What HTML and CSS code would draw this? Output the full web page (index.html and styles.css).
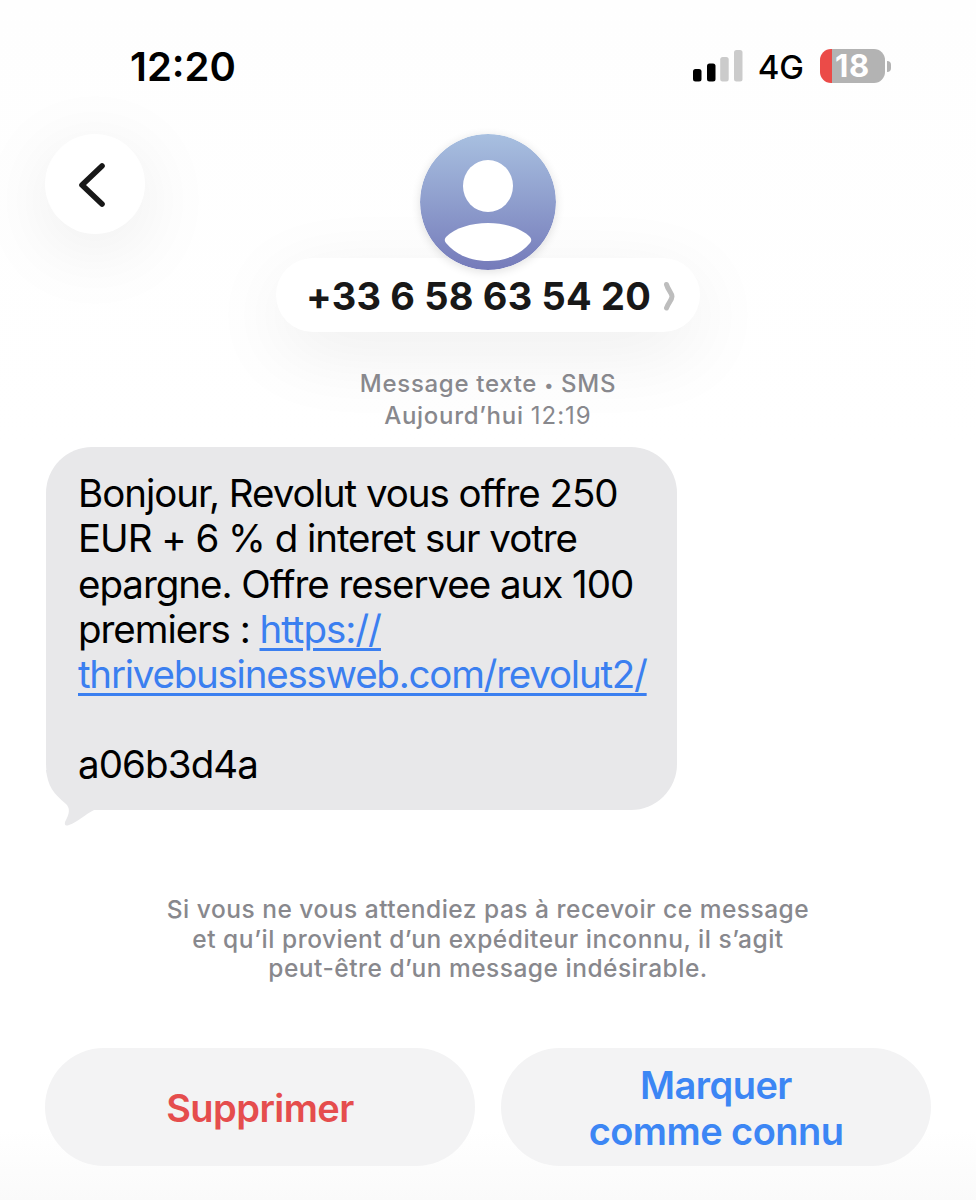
FILE: index.html
```html
<!DOCTYPE html>
<html lang="fr">

<head>
    <meta charset="UTF-8">
    <meta name="viewport" content="width=device-width, initial-scale=1.0">
    <title>Messages</title>
    <link rel="stylesheet" href="styles.css">
</head>
<body>
    <div class="status-bar">
        <span class="time">12:20</span>
        <div class="indicators">
            <svg class="signal" width="50" height="32" viewBox="0 0 50 32">
                <rect x="0" y="19" width="8.5" height="12.5" rx="2.5" fill="#000"/>
                <rect x="14" y="13.5" width="8.5" height="18" rx="2.5" fill="#000"/>
                <rect x="27.2" y="7" width="8.5" height="24.5" rx="2.5" fill="#cbcbcb"/>
                <rect x="41" y="0" width="8.5" height="31.5" rx="2.5" fill="#cbcbcb"/>
            </svg>
            <span class="network">4G</span>
            <div class="battery">
                <span class="battery-body">18</span>
                <span class="battery-tip"></span>
            </div>
        </div>
    </div>

    <header class="header">
        <button class="back" aria-label="Retour">
            <svg width="30" height="46" viewBox="0 0 30 46">
                <path d="M26 4 L6 23 L26 42" fill="none" stroke="#181818" stroke-width="5.6" stroke-linecap="round" stroke-linejoin="round"/>
            </svg>
        </button>
        <div class="contact">
            <svg class="avatar" width="136" height="136" viewBox="0 0 136 136">
                <defs>
                    <linearGradient id="avatarFill" x1="0" y1="0" x2="0" y2="1">
                        <stop offset="0" stop-color="#a8c0e0"/>
                        <stop offset="1" stop-color="#757bba"/>
                    </linearGradient>
                </defs>
                <circle cx="68" cy="68" r="68" fill="url(#avatarFill)"/>
                <ellipse cx="68" cy="52" rx="25" ry="26" fill="#fff"/>
                <path d="M26 103 C35 94 51 89 68 89 C85 89 101 94 110 103 Q112.500 106 110 109 C100 121 85 127 68 127 C51 127 36 121 26 109 Q23.500 106 26 103 Z" fill="#fff"/>
            </svg>
            <div class="contact-name">
                <span class="number">+33 6 58 63 54 20</span>
                <svg width="14" height="30" viewBox="0 0 14 30">
                    <path d="M3.500 3.500 C5 9 9 12 9 15.500 C9 19 5 22 3.500 27" fill="none" stroke="#bdbdbd" stroke-width="5" stroke-linecap="round"/>
                </svg>
            </div>
        </div>
    </header>

    <div class="meta">
        <div class="meta-type">Message texte <span class="dot">•</span> SMS</div>
        <div class="meta-date">Aujourd’hui <span class="hour">12:19</span></div>
    </div>

    <div class="bubble">
        <p>
            <span class="line">Bonjour, Revolut vous offre 250</span>
            <span class="line">EUR + 6 % d interet sur votre</span>
            <span class="line">epargne. Offre reservee aux 100</span>
            <span class="line">premiers : <a href="#">https://</a></span>
            <span class="line link-line"><a href="#">thrivebusinessweb.com/revolut2/</a></span>
        </p>
        <p class="code">a06b3d4a</p>
        <svg class="tail" width="60" height="60" viewBox="0 0 60 60">
            <path d="M0 0 C2 16 7 23 20 34 C24 38 24 43 19 52 Q18 57 23 55 C32 52 38 45 48 40 L60 40 L60 0 Z" fill="#e8e8ea"/>
        </svg>
    </div>

    <div class="notice">
        <div>Si vous ne vous attendiez pas à recevoir ce message</div>
        <div>et qu’il provient d’un expéditeur inconnu, il s’agit</div>
        <div>peut-être d’un message indésirable.</div>
    </div>

    <div class="actions">
        <button class="action delete">Supprimer</button>
        <button class="action known">Marquer<br>comme connu</button>
    </div>
</body>
</html>
```

FILE: styles.css
```css
* {
    box-sizing: border-box;
}

body {
    margin: 0;
    height: 1200px;
    overflow: hidden;
    background: linear-gradient(#fefefe 0, #fff 450px, #fff 1130px, #fafafa 1200px);
    font-family: Inter, "Liberation Sans", sans-serif;
    color: #000;
}

button {
    border: none;
    padding: 0;
    font-family: inherit;
    cursor: pointer;
}

p {
    margin: 0;
}

/* Status bar */
.status-bar {
    display: flex;
    justify-content: space-between;
    height: 134px;
    padding: 42px 85px 0 130px;
}

.time {
    font-size: 40px;
    line-height: 50px;
    font-weight: 600;
}

.indicators {
    display: flex;
    align-items: center;
    height: 48px;
}

.signal {
    margin-right: 15px;
}

.network {
    margin-right: 16px;
    font-size: 33px;
    line-height: 48px;
    font-weight: 500;
    padding-top: 2px;
}

.battery {
    display: flex;
    align-items: center;
    gap: 2px;
}

.battery-body {
    width: 65px;
    height: 34px;
    border-radius: 11px;
    background: linear-gradient(90deg, #eb4b48 12px, #b3b3b3 12px);
    color: #fff;
    font-size: 31px;
    line-height: 34px;
    font-weight: 700;
    letter-spacing: 0.8px;
    text-align: center;
}

.battery-tip {
    width: 4px;
    height: 11px;
    border-radius: 0 6px 6px 0;
    background: #b3b3b3;
}

/* Contact header */
.header {
    display: grid;
    grid-template-columns: 100px 1fr 100px;
    align-items: start;
    height: 198px;
    padding: 0 45px;
}

.back {
    display: flex;
    align-items: center;
    justify-content: center;
    width: 100px;
    height: 100px;
    padding: 1px 9px 0 0;
    border-radius: 50%;
    background: #fff;
    box-shadow: 0 16px 80px rgba(0, 0, 0, 0.08);
}

.contact {
    display: flex;
    flex-direction: column;
    align-items: center;
}

.avatar {
    z-index: 1;
    border-radius: 50%;
    box-shadow: 0 2px 10px rgba(0, 0, 0, 0.12);
}

.contact-name {
    display: flex;
    align-items: center;
    justify-content: space-between;
    width: 424px;
    height: 74px;
    margin-top: -12px;
    padding: 2px 23px 0 30px;
    border-radius: 37px;
    background: #fff;
    box-shadow: 0 20px 80px rgba(0, 0, 0, 0.07);
}

.number {
    color: #181818;
    font-size: 38px;
    font-weight: 700;
    letter-spacing: 0.17px;
    white-space: nowrap;
}

.meta {
    padding-top: 36px;
    height: 115px;
    color: #88888d;
    font-size: 24px;
    line-height: 32px;
    font-weight: 500;
    letter-spacing: 0.7px;
    text-align: center;
}

.dot {
    font-size: 17px;
    line-height: 1;
    vertical-align: 1px;
}

.hour {
    font-weight: 400;
    letter-spacing: 1px;
}

/* Message */
.bubble {
    position: relative;
    isolation: isolate;
    width: 631px;
    height: 363px;
    margin-left: 46px;
    padding: 24px 0 0 32px;
    border-radius: 46px;
    background: #e8e8ea;
    font-size: 38.5px;
    line-height: 45.3px;
    letter-spacing: -1.04px;
    white-space: nowrap;
}

.line {
    display: block;
}

.link-line {
    letter-spacing: -1.24px;
}

.bubble a {
    color: #3b7ff0;
    text-decoration-thickness: 2.5px;
    text-underline-offset: 5px;
}

.code {
    margin-top: 45px;
    letter-spacing: -0.9px;
}

.tail {
    position: absolute;
    left: 0;
    bottom: -20px;
    z-index: -1;
}

.notice {
    margin-top: 85px;
    height: 153px;
    color: #88888d;
    font-size: 24.5px;
    line-height: 29.6px;
    font-weight: 500;
    letter-spacing: 0.5px;
    text-align: center;
}

/* Buttons */
.actions {
    display: grid;
    grid-template-columns: 1fr 1fr;
    gap: 26px;
    padding: 0 45px;
}

.action {
    height: 118px;
    padding-top: 3px;
    border-radius: 59px;
    background: #f3f3f4;
    font-size: 38px;
    line-height: 45.3px;
    font-weight: 600;
    letter-spacing: -0.55px;
}

.delete {
    color: #e54d4d;
}

.known {
    color: #3c86f4;
}
```
